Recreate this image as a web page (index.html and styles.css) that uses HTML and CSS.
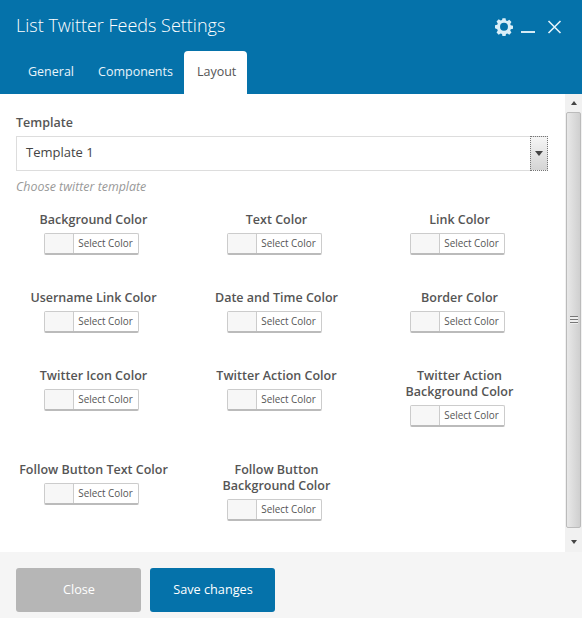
FILE: index.html
```html
<!DOCTYPE html>
<html lang="en">
<head>
    <meta charset="UTF-8">
    <title>List Twitter Feeds Settings</title>
    <link rel="stylesheet" href="styles.css">
</head>
<body>

<div class="modal">
    <div class="modal-header">
        <div class="title-row">
            <div class="modal-title">List Twitter Feeds Settings</div>
            <div class="modal-icons">
                <svg class="icon-gear" width="18" height="18" viewBox="0 0 20 20"><path fill="#d9eef8" fill-rule="evenodd" d="M8.3 0.6h3.4l0.5 2.5 1.5 0.6 2.2-1.4 2.4 2.4-1.4 2.2 0.6 1.5 2.5 0.5v3.4l-2.5 0.5-0.6 1.5 1.4 2.2-2.4 2.4-2.2-1.4-1.5 0.6-0.5 2.5H8.3l-0.5-2.5-1.5-0.6-2.2 1.4-2.4-2.4 1.4-2.2-0.6-1.5L0 11.7V8.3l2.5-0.5 0.6-1.5-1.4-2.2 2.4-2.4 2.2 1.4 1.5-0.6zM10 5.6a4.4 4.4 0 1 0 0 8.8 4.4 4.4 0 0 0 0-8.8z" transform="translate(0 -0.3)"/></svg>
                <span class="icon-min"></span>
                <svg class="icon-close" width="15" height="14" viewBox="0 0 15 14"><path stroke="#e4f3fa" stroke-width="1.6" d="M1.5 1l12 12M13.5 1l-12 12"/></svg>
            </div>
        </div>
        <div class="tabs">
            <div class="tab">General</div>
            <div class="tab">Components</div>
            <div class="tab active">Layout</div>
        </div>
    </div>

    <div class="modal-body">
        <div class="content">
            <div class="field-label">Template</div>
            <div class="select">
                <span class="select-value">Template 1</span>
                <span class="select-arrow"><i class="arrow-down"></i></span>
            </div>
            <div class="hint">Choose twitter template</div>

            <div class="colors">
                <div class="color-item">
                    <div class="color-label">Background Color</div>
                    <div class="color-btn"><span class="swatch"></span><span class="pick">Select Color</span></div>
                </div>
                <div class="color-item">
                    <div class="color-label">Text Color</div>
                    <div class="color-btn"><span class="swatch"></span><span class="pick">Select Color</span></div>
                </div>
                <div class="color-item">
                    <div class="color-label">Link Color</div>
                    <div class="color-btn"><span class="swatch"></span><span class="pick">Select Color</span></div>
                </div>
                <div class="color-item">
                    <div class="color-label">Username Link Color</div>
                    <div class="color-btn"><span class="swatch"></span><span class="pick">Select Color</span></div>
                </div>
                <div class="color-item">
                    <div class="color-label">Date and Time Color</div>
                    <div class="color-btn"><span class="swatch"></span><span class="pick">Select Color</span></div>
                </div>
                <div class="color-item">
                    <div class="color-label">Border Color</div>
                    <div class="color-btn"><span class="swatch"></span><span class="pick">Select Color</span></div>
                </div>
                <div class="color-item">
                    <div class="color-label">Twitter Icon Color</div>
                    <div class="color-btn"><span class="swatch"></span><span class="pick">Select Color</span></div>
                </div>
                <div class="color-item">
                    <div class="color-label">Twitter Action Color</div>
                    <div class="color-btn"><span class="swatch"></span><span class="pick">Select Color</span></div>
                </div>
                <div class="color-item">
                    <div class="color-label">Twitter Action<br>Background Color</div>
                    <div class="color-btn"><span class="swatch"></span><span class="pick">Select Color</span></div>
                </div>
                <div class="color-item">
                    <div class="color-label">Follow Button Text Color</div>
                    <div class="color-btn"><span class="swatch"></span><span class="pick">Select Color</span></div>
                </div>
                <div class="color-item">
                    <div class="color-label">Follow Button<br>Background Color</div>
                    <div class="color-btn"><span class="swatch"></span><span class="pick">Select Color</span></div>
                </div>
            </div>
        </div>

        <div class="scrollbar">
            <div class="scroll-btn"><i class="arrow-up"></i></div>
            <div class="scroll-thumb"><span class="grip"></span></div>
            <div class="scroll-btn bottom"><i class="arrow-down small"></i></div>
        </div>
    </div>

    <div class="modal-footer">
        <div class="btn btn-close">Close</div>
        <div class="btn btn-save">Save changes</div>
    </div>
</div>

</body>
</html>
```

FILE: styles.css
```css
html, body {
    margin: 0;
    height: 100%;
    overflow: hidden;
}
body {
    font-family: 'Open Sans', sans-serif;
    background-color: #fff;
    color: #555;
}
.modal {
    width: 582px;
    height: 618px;
    display: flex;
    flex-direction: column;
}

/* header */
.modal-header {
    height: 94px;
    flex: none;
    background-color: #0572aa;
    display: flex;
    flex-direction: column;
    justify-content: space-between;
}
.title-row {
    display: flex;
    justify-content: space-between;
    padding: 13px 20px 0 16px;
}
.modal-title {
    font-size: 18px;
    font-weight: 300;
    line-height: 25px;
    color: #fff;
}
.modal-icons {
    display: flex;
    align-items: center;
    height: 25px;
    margin-top: 1px;
}
.icon-gear {
    margin-right: 8px;
}
.icon-min {
    width: 14px;
    height: 2px;
    background: #d5eaf4;
    margin: 11px 12px 0 0;
}
.tabs {
    display: flex;
    padding-left: 16px;
}
.tab {
    height: 43px;
    line-height: 42px;
    padding: 0 12px;
    font-size: 12.5px;
    color: #e8f4fa;
    box-sizing: border-box;
}
.tab.active {
    background: #fff;
    color: #555;
    border-radius: 4px 4px 0 0;
    margin-left: -1px;
    padding: 0 11px 0 13px;
}

/* body */
.modal-body {
    flex: 1;
    min-height: 0;
    display: flex;
}
.content {
    flex: 1;
    min-width: 0;
    padding: 19px 17px 0 16px;
}
.field-label {
    font-size: 12.5px;
    line-height: 20px;
    font-weight: 600;
    margin-bottom: 3px;
}
.select {
    height: 35px;
    border: 1px solid #ddd;
    box-sizing: border-box;
    display: flex;
    justify-content: space-between;
    align-items: center;
    padding-left: 9px;
    background: #fff;
}
.select-value {
    font-size: 13px;
    color: #444;
    padding-bottom: 3px;
}
.select-arrow {
    width: 18px;
    height: 35px;
    margin: -1px;
    box-sizing: border-box;
    border: 1px dotted #777;
    background: linear-gradient(#f6f6f6, #d4d4d4);
    display: flex;
    align-items: center;
    justify-content: center;
}
.arrow-down {
    width: 0;
    height: 0;
    border-left: 4px solid transparent;
    border-right: 4px solid transparent;
    border-top: 5px solid #444;
}
.arrow-down.small {
    border-left-width: 3px;
    border-right-width: 3px;
    border-top-width: 4px;
}
.arrow-up {
    width: 0;
    height: 0;
    border-left: 3px solid transparent;
    border-right: 3px solid transparent;
    border-bottom: 4px solid #444;
}
.hint {
    font-size: 12.4px;
    font-style: italic;
    line-height: 16px;
    color: #999;
    margin-top: 8px;
}
.colors {
    display: grid;
    grid-template-columns: repeat(3, 183px);
    margin: 17px 0 0 -14px;
}
.color-item {
    display: flex;
    flex-direction: column;
    align-items: center;
    margin-bottom: 35px;
}
.color-label {
    font-size: 12.5px;
    line-height: 16px;
    font-weight: 600;
    text-align: center;
    white-space: nowrap;
    margin-bottom: 5px;
}
.color-btn {
    width: 95px;
    height: 22px;
    margin-right: 5px;
    box-sizing: border-box;
    display: flex;
    border: 1px solid #ccc;
    border-bottom: 2px solid #bbb;
    border-radius: 2px;
    background: #fff;
}
.swatch {
    width: 28px;
    background: #f7f7f7;
    border-right: 1px solid #ccc;
}
.pick {
    flex: 1;
    text-align: center;
    font-size: 9.9px;
    line-height: 19px;
    color: #555;
}

/* scrollbar */
.scrollbar {
    width: 17px;
    flex: none;
    background: #f1f1f1;
    display: flex;
    flex-direction: column;
}
.scroll-btn {
    height: 18px;
    flex: none;
    display: flex;
    align-items: center;
    justify-content: center;
}
.scroll-btn.bottom {
    height: 24px;
    padding-top: 4px;
    box-sizing: border-box;
}
.scroll-thumb {
    flex: 1;
    margin: 0 1px;
    border: 1px solid #bbb;
    border-radius: 2px;
    background: linear-gradient(90deg, #e8e8e8, #cfcfcf);
    display: flex;
    align-items: center;
    justify-content: center;
}
.grip {
    width: 8px;
    height: 8px;
    background: repeating-linear-gradient(#777 0 1px, #eee 1px 3px);
}

/* footer */
.modal-footer {
    height: 66px;
    flex: none;
    box-sizing: border-box;
    background-color: #f5f5f5;
    padding: 16px 16px 0;
    display: flex;
    gap: 9px;
}
.btn {
    width: 125px;
    height: 44px;
    line-height: 43px;
    text-align: center;
    text-indent: 1px;
    font-size: 12.7px;
    color: #fff;
    border-radius: 3px;
}
.btn-close {
    background-color: #b6b6b6;
}
.btn-save {
    background-color: #0572aa;
}
```
